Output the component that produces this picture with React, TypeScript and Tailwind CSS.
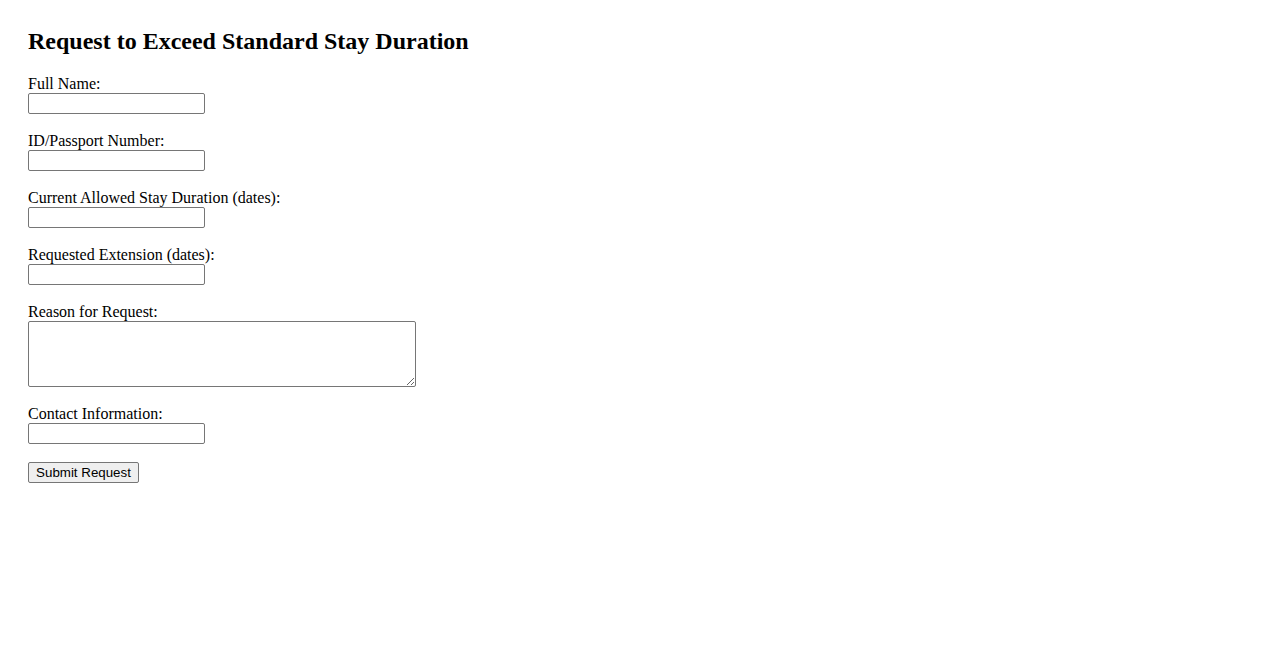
import React from "react";

const serif = { fontFamily: '"Liberation Serif", "Times New Roman", serif' };

function Field({ label, mb = "mb-[17px]" }: { label: string; mb?: string }) {
  return (
    <div className={mb}>
      <label className="block text-[16px] leading-[19px] text-black">{label}</label>
      <input
        type="text"
        className="block w-[177px] h-[21px] border border-[#767676] rounded-[2px] bg-white px-[2px] py-[1px] text-[13.33px] font-['Liberation_Sans',Arial,sans-serif]"
      />
    </div>
  );
}

export default function App() {
  return (
    <div className="min-h-screen bg-white px-[28px] pt-[27px] font-['Liberation_Serif','Times_New_Roman',serif] text-black" style={serif}>
      <h2 className="text-[24px] font-bold leading-[28px] mb-[19px]">Request to Exceed Standard Stay Duration</h2>
      <form onSubmit={(e) => e.preventDefault()}>
        <Field label="Full Name:" />
        <Field label="ID/Passport Number:" />
        <Field label="Current Allowed Stay Duration (dates):" />
        <Field label="Requested Extension (dates):" />
        <div className="mb-[17px]">
          <label className="block text-[16px] leading-[19px]">Reason for Request:</label>
          <textarea className="block w-[388px] h-[66px] border border-[#767676] rounded-[2px] bg-white p-[2px] text-[13.33px] resize" />
        </div>
        <Field label="Contact Information:" mb="mb-[18px]" />
        <button
          type="submit"
          className="block w-[111px] h-[21px] border border-[#767676] rounded-[2px] bg-[#efefef] text-[13.33px] leading-[15px] text-black font-['Liberation_Sans',Arial,sans-serif] px-[6px]"
        >
          Submit Request
        </button>
      </form>
    </div>
  );
}
